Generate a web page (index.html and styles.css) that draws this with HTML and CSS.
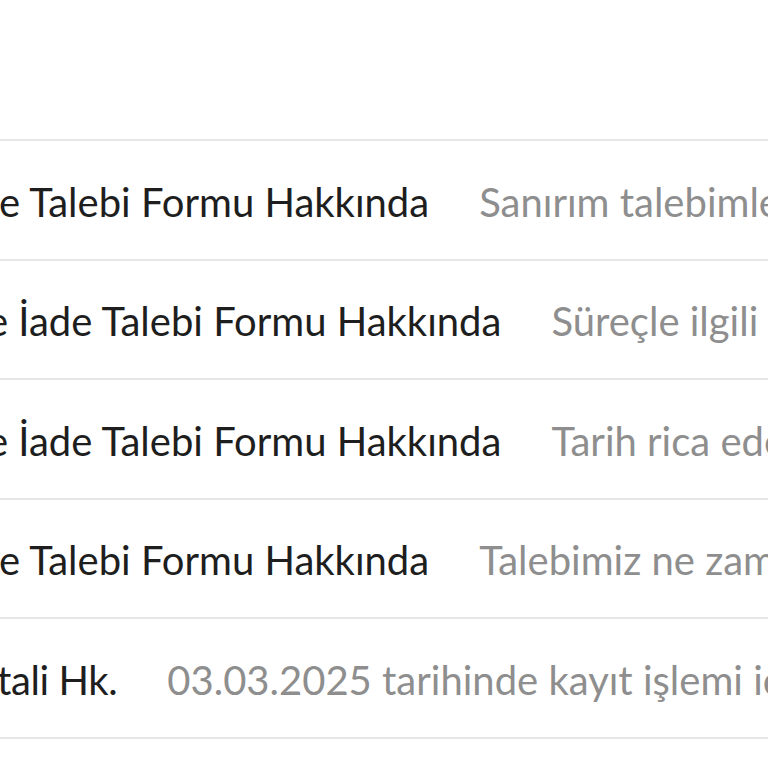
FILE: index.html
```html
<!DOCTYPE html>
<html lang="tr">
<head>
<meta charset="utf-8">
<link rel="stylesheet" href="styles.css">
</head>
<body>
<div class="page">
  <div class="top"></div>
  <ul class="list">
    <li class="row"><span class="subj s1">e Talebi Formu Hakkında</span><span class="snip">Sanırım talebimlerimiz hakkında</span></li>
    <li class="row"><span class="subj s2">e İade Talebi Formu Hakkında</span><span class="snip">Süreçle ilgili bilgi</span></li>
    <li class="row"><span class="subj s2">e İade Talebi Formu Hakkında</span><span class="snip">Tarih rica ederiz</span></li>
    <li class="row"><span class="subj s1">e Talebi Formu Hakkında</span><span class="snip">Talebimiz ne zaman</span></li>
    <li class="row"><span class="subj s5">tali Hk.</span><span class="snip">03.03.2025 tarihinde kayıt işlemi için</span></li>
  </ul>
</div>
</body>
</html>
```
FILE: styles.css
```css
html, body {
  margin: 0;
  padding: 0;
  background: #fff;
}
.page {
  width: 768px;
  height: 768px;
  overflow: hidden;
  font-family: Lato, "Open Sans", sans-serif;
}
.top {
  height: 139px;
}
.list {
  list-style: none;
  margin: 0;
  padding: 0;
  border-top: 2px solid #e6e6e6;
}
.row {
  box-sizing: border-box;
  height: 119.5px;
  border-bottom: 2px solid #e6e6e6;
  display: flex;
  align-items: center;
  gap: 50px;
  white-space: nowrap;
  overflow: hidden;
  font-size: 40px;
  padding-top: 4px;
}
.subj {
  color: #1e1e1e;
  flex: none;
}
.s1 { margin-left: -1px; }
.s2 { margin-left: -13px; }
.s5 { margin-left: -3px; letter-spacing: -0.4px; }
.snip {
  color: #8e8e8e;
}
```
